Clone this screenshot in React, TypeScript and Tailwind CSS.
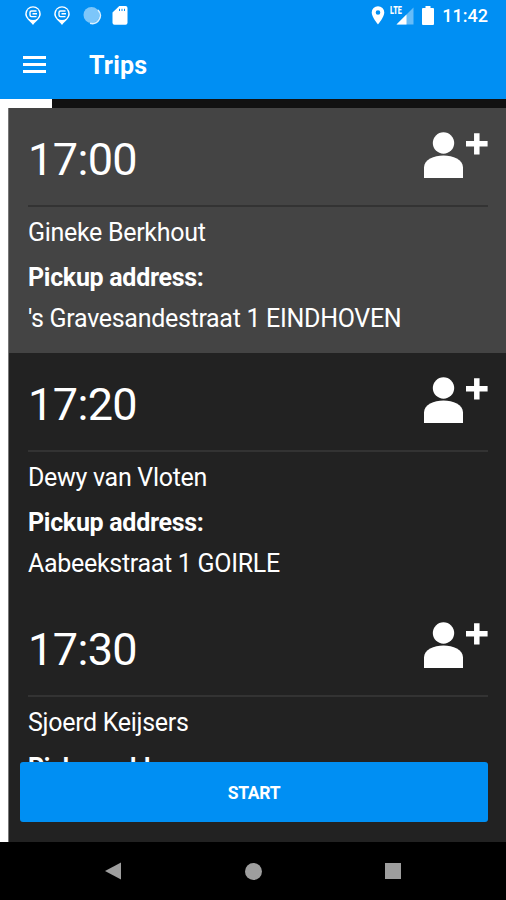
import React from 'react';

interface Trip {
    time: string;
    passenger: string;
    address: string;
    active?: boolean;
}

const trips: Trip[] = [
    { time: '17:00', passenger: 'Gineke Berkhout', address: "'s Gravesandestraat 1 EINDHOVEN", active: true },
    { time: '17:20', passenger: 'Dewy van Vloten', address: 'Aabeekstraat 1 GOIRLE' },
    { time: '17:30', passenger: 'Sjoerd Keijsers', address: '' },
];

const CopyPin: React.FC = () => (
    <svg width="18" height="20" viewBox="0 0 18 20" fill="none">
        <path d="M9 .2A7.800 7.800 0 0 0 1.200 8c0 4.300 5 7.200 7.800 10.900 2.800-3.700 7.800-6.600 7.800-10.900A7.800 7.800 0 0 0 9 .2Z" fill="#fff" />
        <circle cx="9" cy="7.800" r="6.300" fill="#008ff3" />
        <path d="M12.500 5H7.500a1.500 1.500 0 0 0-1.500 1.500v2.600a1.500 1.500 0 0 0 1.500 1.500h5M8.500 7.800H13" stroke="#fff" strokeWidth="1.400" />
    </svg>
);

const AddPerson: React.FC = () => (
    <svg width="66" height="50" viewBox="0 0 66 50" fill="#fff">
        <circle cx="21.500" cy="12" r="10.700" />
        <path d="M2 47V36.500C2 28.500 12 24.500 21.500 24.500S41 28.500 41 36.500V47Z" />
        <path d="M54.800 2.200v21.300M44 12.700h21.600" stroke="#fff" strokeWidth="5.500" />
    </svg>
);

const StatusBar: React.FC = () => (
    <div className="flex h-8 items-center justify-between pl-6 pr-[18px]">
        <div className="flex items-center">
            <CopyPin />
            <div className="ml-[11px]"><CopyPin /></div>
            <svg className="ml-[11px]" width="20" height="20" viewBox="0 0 20 20">
                <circle cx="9.500" cy="9" r="8" fill="#7cc6fa" />
                <path d="M16 4A8 8 0 0 1 8 17.200" fill="none" stroke="#dcf1ff" strokeWidth="1.600" />
            </svg>
            <svg className="ml-[10px]" width="18" height="20" viewBox="0 0 18 20">
                <path d="M7.300 0H13.500a2 2 0 0 1 2 2V16.800a2 2 0 0 1-2 2H2.500a2 2 0 0 1-2-2V6.500Z" fill="#fff" />
                <path d="M7.500 2.800v2.200M10 2.800v2.200M12.500 2.800v2.200" stroke="#008ff3" strokeWidth="1" />
            </svg>
        </div>
        <div className="flex items-center text-white">
            <svg className="mr-[2px]" width="14" height="20" viewBox="0 0 14 20">
                <path d="M7 .2A6.300 6.300 0 0 0 .7 6.500C.7 11.200 7 18.400 7 18.400s6.300-7.200 6.300-11.900A6.300 6.300 0 0 0 7 .2Zm0 8.600a2.300 2.300 0 1 1 0-4.600 2.300 2.300 0 0 1 0 4.600Z" fill="#fff" />
            </svg>
            <div className="relative ml-[3px] h-5 w-6">
                <svg width="24" height="20" viewBox="0 0 24 20">
                    <path d="M6.500 18.500 23.500 1.500v17Z" fill="#66bcf8" />
                    <path d="M6.500 18.500 16.500 8.500v10Z" fill="#fff" />
                </svg>
                <span className="absolute left-0 top-0 origin-left scale-x-[0.72] text-[10px] font-black leading-[10px]">LTE</span>
            </div>
            <svg className="ml-[8px]" width="12" height="20" viewBox="0 0 12 20">
                <path d="M3.500 0h5v2H11a1 1 0 0 1 1 1v15a1 1 0 0 1-1 1H1a1 1 0 0 1-1-1V3a1 1 0 0 1 1-1h2.500Z" fill="#fff" />
            </svg>
            <span className="ml-[8px] text-[18px] font-medium leading-5">11:42</span>
        </div>
    </div>
);

const TripCard: React.FC<Trip> = ({ time, passenger, address, active }) => (
    <div className={`h-[245px] shrink-0 pl-[19px] pr-[18px] tracking-[-0.3px] ${active ? 'bg-[#444444]' : 'bg-[#222222]'}`}>
        <div className="flex h-[99px] items-start justify-between border-b-2 border-[#333333]">
            <span className="pt-[25px] text-[45px] leading-[53px] tracking-[-0.6px]">{time}</span>
            <div className="pt-[23px]"><AddPerson /></div>
        </div>
        <p className="pt-[8px] text-[25px] leading-[36px]">{passenger}</p>
        <p className="pt-[9px] text-[25px] font-bold leading-[36px]">Pickup address:</p>
        <p className="pt-[5px] text-[25px] leading-[36px]">{address}</p>
    </div>
);

export default function App() {
    return (
        <div className="flex h-[900px] w-[506px] flex-col overflow-hidden bg-white font-['Roboto',sans-serif] text-white">
            <header className="h-[99px] shrink-0 bg-[#008ff3]">
                <StatusBar />
                <div className="flex h-[67px] items-center pl-[23px]">
                    <div className="flex w-[23px] flex-col gap-1 pb-[2px]">
                        <div className="h-[3px] bg-white" />
                        <div className="h-[3px] bg-white" />
                        <div className="h-[3px] bg-white" />
                    </div>
                    <h1 className="ml-[43px] text-[25px] font-bold tracking-[0.2px]">Trips</h1>
                </div>
            </header>
            <div className="ml-[52px] h-[9px] shrink-0 bg-[#111111]" />
            <main className="relative ml-2 flex h-[734px] shrink-0 flex-col overflow-hidden border-l border-[#777777] bg-[#222222]">
                {trips.map((trip) => (
                    <TripCard key={trip.time} {...trip} />
                ))}
                <div className="absolute inset-x-0 bottom-0 h-[80px] bg-[#222222] pl-[11px] pr-[18px]">
                    <button className="h-[60px] w-full rounded-[3px] bg-[#008ff3] pt-[2px] text-[17.5px] font-bold tracking-[-0.3px]">START</button>
                </div>
            </main>
            <nav className="flex h-[58px] shrink-0 items-center justify-between bg-black pl-[105px] pr-[105px]">
                <svg width="16" height="18" viewBox="0 0 16 18"><path d="M0 9 16 .5v17Z" fill="#9e9e9e" /></svg>
                <div className="h-[17px] w-[17px] rounded-full bg-[#9e9e9e]" />
                <div className="h-4 w-4 bg-[#9e9e9e]" />
            </nav>
        </div>
    );
}
